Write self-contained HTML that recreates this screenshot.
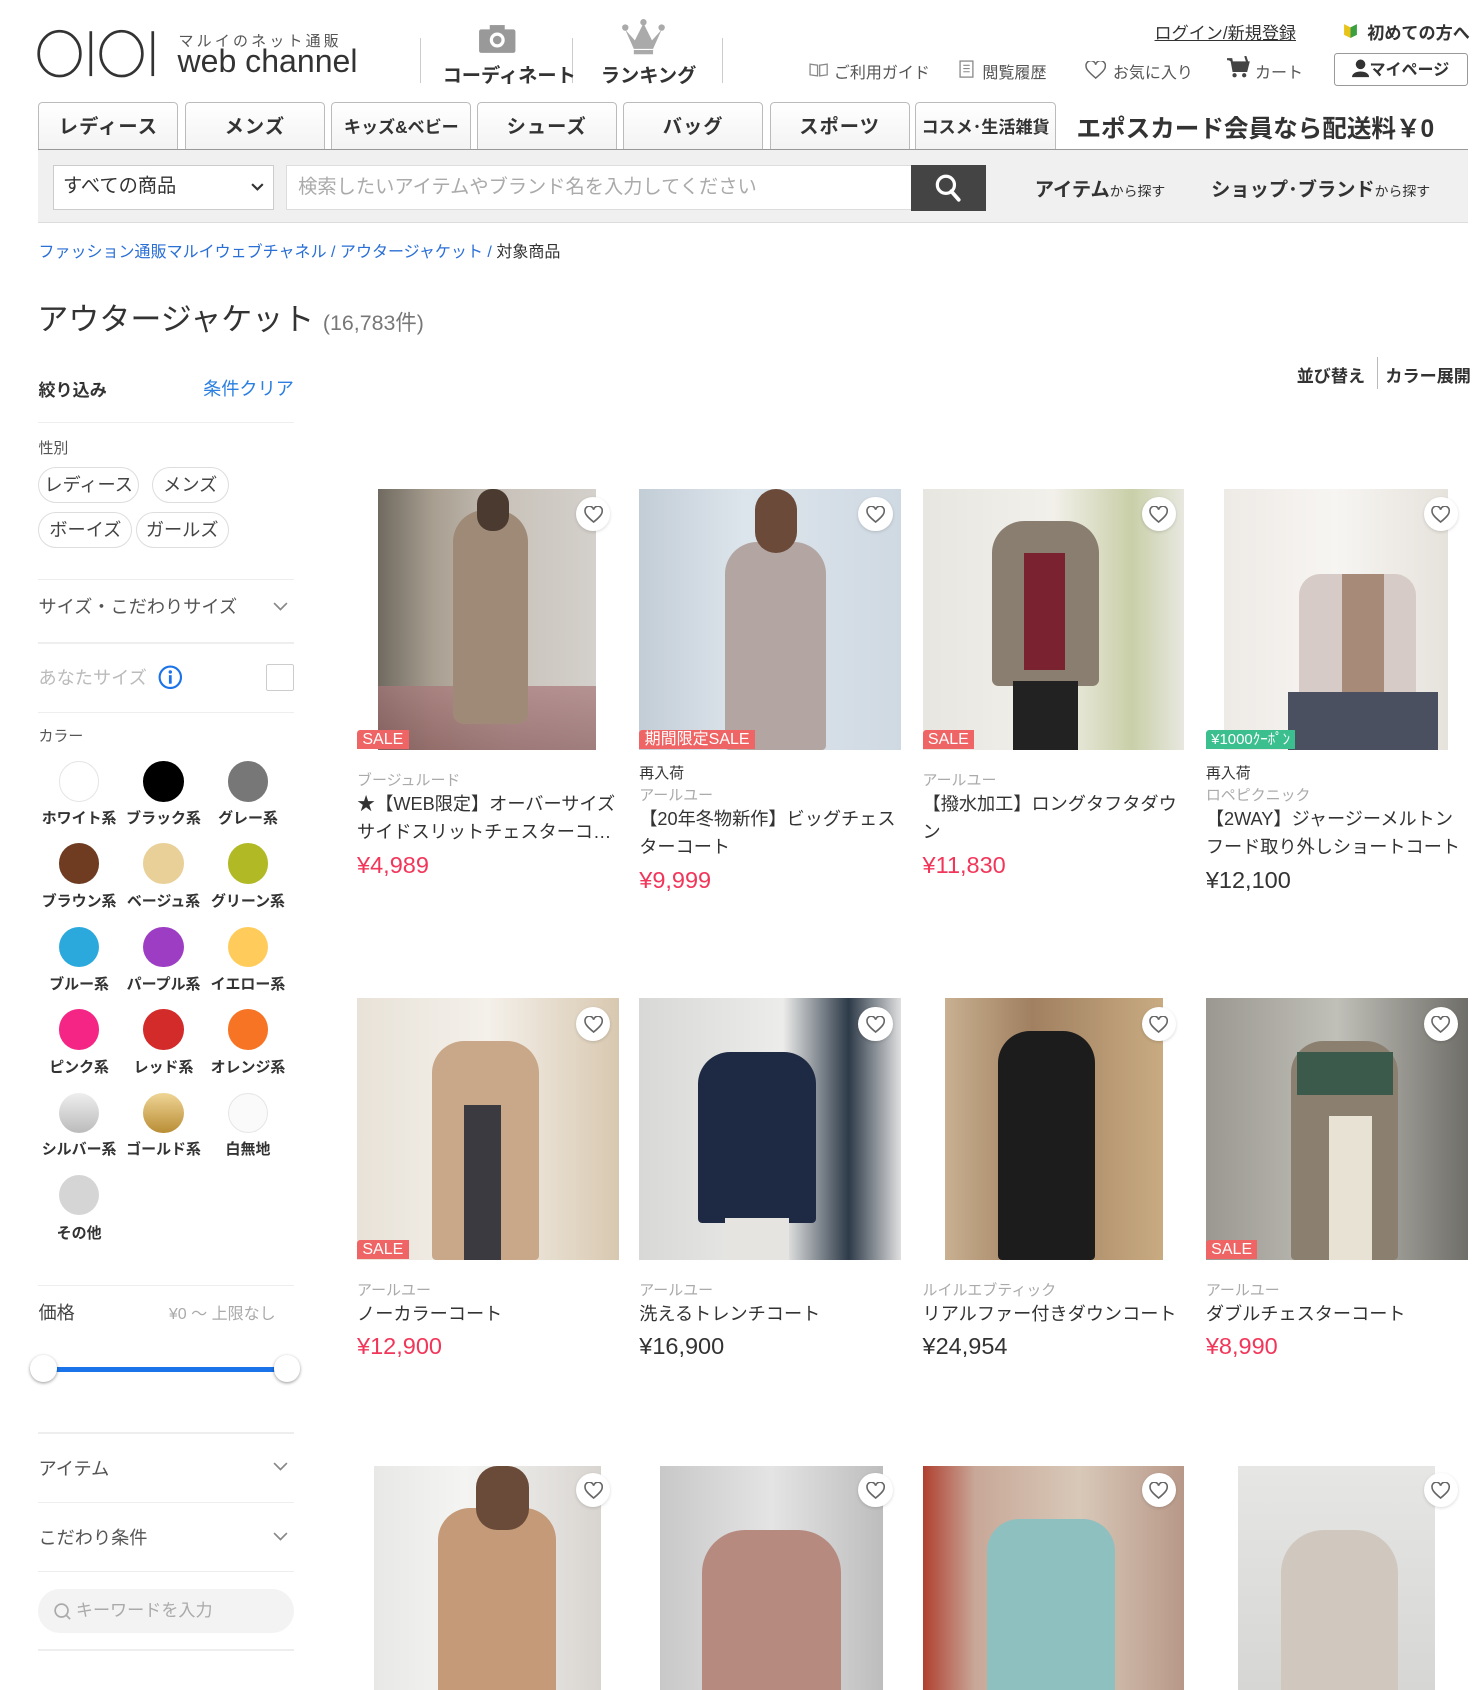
<!DOCTYPE html>
<html><head><meta charset="utf-8">
<style>
html{zoom:1.069}
body{margin:0;width:1388px;height:1563px;overflow:hidden;position:relative;background:#fff;font-family:"Liberation Sans","Noto Sans CJK JP",sans-serif;color:#333}
.a{position:absolute;white-space:nowrap}
.b{font-weight:bold}
.tab{position:absolute;top:95px;width:129px;height:44px;border:1px solid #bbb;border-bottom:none;border-radius:4px 4px 0 0;background:linear-gradient(#fff,#f3f3f3);text-align:center;line-height:46px;font-weight:bold;font-size:18px;color:#333;letter-spacing:1px}
.sw{position:absolute;width:38px;height:38px;border-radius:50%}
.sl{position:absolute;width:80px;text-align:center;font-size:14px;font-weight:bold;color:#333}
.hr{position:absolute;left:36px;width:239px;height:1px;background:#eee}
.pill{position:absolute;height:32px;border:1px solid #ddd;border-radius:17px;font-size:17px;line-height:32px;text-align:center;color:#444}
.img{position:absolute;overflow:hidden}
.heart{position:absolute;width:32px;height:32px;border-radius:50%;background:#fff;box-shadow:0 1px 3px rgba(0,0,0,.15)}
.heart svg{position:absolute;left:7px;top:8px}
.badge{position:absolute;height:18px;line-height:18px;font-size:15px;color:#fff;background:#ef6464;padding:0 5px;border-radius:3px 0 0 0}
.br{position:absolute;font-size:14px;color:#aaa;white-space:nowrap}
.t{position:absolute;font-size:17px;color:#333;line-height:26px;width:242px}
.p{position:absolute;font-size:22px;color:#333}
.red{color:#f2365a}
.chev{position:absolute;left:255px}
</style></head><body>
<svg class="a" style="left:34px;top:26px" width="124" height="50" viewBox="0 0 124 50">
<ellipse cx="22" cy="24" rx="19.5" ry="21" fill="none" stroke="#333" stroke-width="2.5"/>
<rect x="50" y="3" width="2.5" height="42" fill="#333"/>
<ellipse cx="80" cy="24" rx="19.5" ry="21" fill="none" stroke="#333" stroke-width="2.5"/>
<rect x="108" y="3" width="2.5" height="42" fill="#333"/>
</svg>
<div class="a" style="left:167px;top:28px;font-size:14px;color:#555;letter-spacing:3px">マルイのネット通販</div>
<div class="a" style="left:166px;top:40px;font-size:30px;color:#333">web channel</div>
<div class="a" style="left:393px;top:36px;width:1px;height:42px;background:#ccc"></div>
<div class="a" style="left:535px;top:36px;width:1px;height:42px;background:#ccc"></div>
<div class="a" style="left:675px;top:36px;width:1px;height:42px;background:#ccc"></div>
<svg class="a" style="left:447px;top:22px" width="36" height="28"><rect x="1" y="5" width="34" height="22" rx="2" fill="#999"/><rect x="11" y="1" width="14" height="6" fill="#999"/><circle cx="18" cy="15" r="7" fill="#fff"/><circle cx="18" cy="15" r="4" fill="#999"/></svg>
<div class="a b" style="left:414px;top:56px;font-size:18px">コーディネート</div>
<svg class="a" style="left:581px;top:18px" width="42" height="34"><path d="M4 10 L12 28 L30 28 L38 10 L29 20 L21 4 L13 20 Z" fill="#aaa"/><circle cx="4" cy="8" r="3" fill="#aaa"/><circle cx="38" cy="8" r="3" fill="#aaa"/><circle cx="21" cy="3" r="3" fill="#aaa"/><rect x="12" y="29" width="18" height="4" fill="#aaa"/></svg>
<div class="a b" style="left:562px;top:56px;font-size:18px">ランキング</div>

<div class="a" style="left:1080px;top:18px;font-size:16px;text-decoration:underline;color:#333">ログイン/新規登録</div>
<svg class="a" style="left:1256px;top:21px" width="14" height="16"><path d="M1 2 L7 5 L7 15 L1 12Z" fill="#e8c41a"/><path d="M13 2 L7 5 L7 15 L13 12Z" fill="#3aa040"/></svg>
<div class="a b" style="left:1279px;top:18px;font-size:16px">初めての方へ</div>
<svg class="a" style="left:757px;top:58px" width="18" height="14"><path d="M1 2 L8 3 L8 13 L1 12Z M17 2 L10 3 L10 13 L17 12Z" fill="none" stroke="#888" stroke-width="1.2"/></svg>
<div class="a" style="left:780px;top:55px;font-size:15px;color:#555">ご利用ガイド</div>
<svg class="a" style="left:897px;top:56px" width="14" height="17"><rect x="1" y="1" width="12" height="15" fill="none" stroke="#888" stroke-width="1.2"/><path d="M4 5h6M4 8h6M4 11h6" stroke="#888"/></svg>
<div class="a" style="left:919px;top:55px;font-size:15px;color:#555">閲覧履歴</div>
<svg class="a" style="left:1015px;top:57px" width="20" height="17"><path d="M10 16 C3 10 1 7.5 1 5 A4.5 4.5 0 0 1 10 3.5 A4.5 4.5 0 0 1 19 5 C19 7.5 17 10 10 16Z" fill="none" stroke="#666" stroke-width="1.4"/></svg>
<div class="a" style="left:1041px;top:55px;font-size:15px;color:#555">お気に入り</div>
<svg class="a" style="left:1147px;top:52px" width="22" height="22"><path d="M1 3 L5 3 L7 14 L19 14 L21 6 L6 6" fill="#444" stroke="#444" stroke-width="2"/><circle cx="8" cy="18" r="2" fill="#444"/><circle cx="17" cy="18" r="2" fill="#444"/><path d="M18 0 L20 6" stroke="#444" stroke-width="2"/></svg>
<div class="a" style="left:1174px;top:55px;font-size:15px;color:#555">カート</div>
<div class="a" style="left:1248px;top:50px;width:123px;height:29px;border:1px solid #999;border-radius:3px;font-size:15px;line-height:30px;text-align:center;font-weight:bold"><svg width="16" height="17" style="vertical-align:-2px"><circle cx="8" cy="5" r="4.5" fill="#333"/><path d="M0 17 C0 10 16 10 16 17Z" fill="#333"/></svg>マイページ</div>

<div class="tab" style="left:36px">レディース</div>
<div class="tab" style="left:173px">メンズ</div>
<div class="tab" style="left:310px;font-size:16px;letter-spacing:0">キッズ&amp;ベビー</div>
<div class="tab" style="left:446px">シューズ</div>
<div class="tab" style="left:583px">バッグ</div>
<div class="tab" style="left:720px">スポーツ</div>
<div class="tab" style="left:856px;width:130px;font-size:16px;letter-spacing:0">コスメ･生活雑貨</div>
<div class="a b" style="left:1007px;top:102px;font-size:23px;color:#333">エポスカード会員なら配送料￥0</div>

<div class="a" style="left:36px;top:139px;width:1337px;height:68px;background:#f0f0f0;border-top:1px solid #999;border-bottom:1px solid #ddd"></div>
<div class="a" style="left:50px;top:154px;width:204px;height:41px;background:#fff;border:1px solid #ccc;font-size:18px;line-height:40px;text-indent:8px">すべての商品<svg style="position:absolute;right:8px;top:16px" width="12" height="8"><path d="M1 1 L6 6 L11 1" fill="none" stroke="#333" stroke-width="2"/></svg></div>
<div class="a" style="left:268px;top:154px;width:584px;height:41px;background:#fff;border:1px solid #ddd;font-size:18px;line-height:41px;text-indent:10px;color:#aaa">検索したいアイテムやブランド名を入力してください</div>
<div class="a" style="left:852px;top:154px;width:70px;height:43px;background:#444"></div>
<svg class="a" style="left:872px;top:161px" width="30" height="30"><circle cx="13" cy="12" r="8" fill="none" stroke="#fff" stroke-width="3"/><path d="M18 18 L25 26" stroke="#fff" stroke-width="3.5" stroke-linecap="round"/></svg>
<div class="a b" style="left:968px;top:163px;font-size:18px">アイテム<span style="font-size:13px;font-weight:normal">から探す</span></div>
<div class="a b" style="left:1133px;top:163px;font-size:18px">ショップ･ブランド<span style="font-size:13px;font-weight:normal">から探す</span></div>

<div class="a" style="left:36px;top:223px;font-size:15px;color:#2a6fd6">ファッション通販マルイウェブチャネル / アウタージャケット / <span style="color:#333">対象商品</span></div>
<div class="a" style="left:35px;top:275px;font-size:29px;color:#333">アウタージャケット <span style="font-size:20px;color:#777">(16,783件)</span></div>

<div class="a b" style="left:36px;top:352px;font-size:16px">絞り込み</div>
<div class="a" style="left:190px;top:351px;font-size:17px;color:#2a7fe0">条件クリア</div>
<div class="hr" style="top:395px"></div>
<div class="a" style="left:36px;top:409px;font-size:14px;color:#555">性別</div>
<div class="pill" style="left:36px;top:437px;width:92px">レディース</div>
<div class="pill" style="left:142px;top:437px;width:70px">メンズ</div>
<div class="pill" style="left:36px;top:479px;width:86px">ボーイズ</div>
<div class="pill" style="left:127px;top:479px;width:85px">ガールズ</div>
<div class="hr" style="top:542px"></div>
<div class="a" style="left:36px;top:555px;font-size:17px;color:#555">サイズ・こだわりサイズ</div>
<svg class="chev" style="top:563px" width="14" height="9"><path d="M1 1 L7 7 L13 1" fill="none" stroke="#888" stroke-width="1.6"/></svg>
<div class="hr" style="top:601px"></div>
<div class="a" style="left:36px;top:621px;font-size:17px;color:#bbb">あなたサイズ</div>
<svg class="a" style="left:148px;top:622px" width="23" height="23"><circle cx="11.5" cy="11.5" r="10" fill="none" stroke="#1a73e8" stroke-width="2"/><circle cx="11.5" cy="6.5" r="1.6" fill="#1a73e8"/><rect x="10.2" y="9.5" width="2.6" height="8" fill="#1a73e8"/></svg>
<div class="a" style="left:249px;top:621px;width:24px;height:24px;border:1px solid #ccc;border-radius:2px"></div>
<div class="hr" style="top:666px"></div>
<div class="a" style="left:36px;top:678px;font-size:14px;color:#555">カラー</div>

<div class="sw" style="left:55px;top:712px;border:1px solid #e5e5e5;width:36px;height:36px"></div>
<div class="sw" style="left:134px;top:712px;background:#000"></div>
<div class="sw" style="left:213px;top:712px;background:#777"></div>
<div class="sl" style="left:34px;top:755px">ホワイト系</div><div class="sl" style="left:113px;top:755px">ブラック系</div><div class="sl" style="left:192px;top:755px">グレー系</div>
<div class="sw" style="left:55px;top:789px;background:#6f3c22"></div>
<div class="sw" style="left:134px;top:789px;background:#e8d098"></div>
<div class="sw" style="left:213px;top:789px;background:#b1b924"></div>
<div class="sl" style="left:34px;top:833px">ブラウン系</div><div class="sl" style="left:113px;top:833px">ベージュ系</div><div class="sl" style="left:192px;top:833px">グリーン系</div>
<div class="sw" style="left:55px;top:867px;background:#2ba9dc"></div>
<div class="sw" style="left:134px;top:867px;background:#9d3dc4"></div>
<div class="sw" style="left:213px;top:867px;background:#ffcc5c"></div>
<div class="sl" style="left:34px;top:910px">ブルー系</div><div class="sl" style="left:113px;top:910px">パープル系</div><div class="sl" style="left:192px;top:910px">イエロー系</div>
<div class="sw" style="left:55px;top:944px;background:#f42584"></div>
<div class="sw" style="left:134px;top:944px;background:#d32a2a"></div>
<div class="sw" style="left:213px;top:944px;background:#f77424"></div>
<div class="sl" style="left:34px;top:988px">ピンク系</div><div class="sl" style="left:113px;top:988px">レッド系</div><div class="sl" style="left:192px;top:988px">オレンジ系</div>
<div class="sw" style="left:55px;top:1022px;background:linear-gradient(#eee,#bbb)"></div>
<div class="sw" style="left:134px;top:1022px;background:linear-gradient(#efd595,#b98d35)"></div>
<div class="sw" style="left:213px;top:1022px;border:1px solid #e5e5e5;width:36px;height:36px;background:#fafafa"></div>
<div class="sl" style="left:34px;top:1065px">シルバー系</div><div class="sl" style="left:113px;top:1065px">ゴールド系</div><div class="sl" style="left:192px;top:1065px">白無地</div>
<div class="sw" style="left:55px;top:1099px;background:#d5d5d5"></div>
<div class="sl" style="left:34px;top:1143px">その他</div>

<div class="hr" style="top:1202px"></div>
<div class="a" style="left:36px;top:1215px;font-size:17px;color:#444">価格</div>
<div class="a" style="left:158px;top:1216px;font-size:15px;color:#aaa">¥0 〜 上限なし</div>
<div class="a" style="left:42px;top:1279px;width:226px;height:4px;background:#1a73e8"></div>
<div class="a" style="left:28px;top:1268px;width:25px;height:25px;border-radius:50%;background:#fff;box-shadow:0 1px 3px rgba(0,0,0,.4)"></div>
<div class="a" style="left:256px;top:1268px;width:25px;height:25px;border-radius:50%;background:#fff;box-shadow:0 1px 3px rgba(0,0,0,.4)"></div>
<div class="hr" style="top:1340px"></div>
<div class="a" style="left:36px;top:1361px;font-size:17px;color:#555">アイテム</div>
<svg class="chev" style="top:1368px" width="14" height="9"><path d="M1 1 L7 7 L13 1" fill="none" stroke="#888" stroke-width="1.6"/></svg>
<div class="hr" style="top:1405px"></div>
<div class="a" style="left:36px;top:1426px;font-size:17px;color:#555">こだわり条件</div>
<svg class="chev" style="top:1433px" width="14" height="9"><path d="M1 1 L7 7 L13 1" fill="none" stroke="#888" stroke-width="1.6"/></svg>
<div class="hr" style="top:1470px"></div>
<div class="a" style="left:36px;top:1486px;width:239px;height:42px;border-radius:21px;background:#f3f3f3;font-size:16px;line-height:42px;color:#aaa"><svg style="position:absolute;left:14px;top:13px" width="18" height="18"><circle cx="8" cy="8" r="6" fill="none" stroke="#aaa" stroke-width="1.6"/><path d="M12 12 L16 16" stroke="#aaa" stroke-width="1.6"/></svg><span style="position:absolute;left:35px">キーワードを入力</span></div>
<div class="hr" style="top:1543px"></div>

<div class="a b" style="left:1213px;top:339px;font-size:16px">並び替え</div>
<div class="a" style="left:1288px;top:334px;width:1px;height:30px;background:#bbb"></div>
<div class="a b" style="left:1296px;top:339px;font-size:16px">カラー展開</div>

<!-- row 1 -->
<div class="img" style="left:354px;top:457px;width:204px;height:245px;background:linear-gradient(90deg,#6f6a60 0,#a89e90 25%,#c9c3bb 60%,#d4d0cb 100%)"><div style="position:absolute;left:0;top:185px;width:204px;height:60px;background:linear-gradient(#a8787a,#8a5a5c);opacity:.7"></div><div style="position:absolute;left:70px;top:20px;width:70px;height:200px;background:#9e8a76;border-radius:30px 30px 10px 10px"></div><div style="position:absolute;left:92px;top:0;width:30px;height:40px;background:#4a3a30;border-radius:14px"></div></div>
<div class="badge" style="left:334px;top:683px">SALE</div>
<div class="heart" style="left:539px;top:465px"><svg width="18" height="16"><path d="M9 15 C3 10 1 7.5 1 5 A4 4 0 0 1 9 3.5 A4 4 0 0 1 17 5 C17 7.5 15 10 9 15Z" fill="none" stroke="#666" stroke-width="1.5"/></svg></div>
<div class="br" style="left:334px;top:719px">ブージュルード</div>
<div class="t" style="left:334px;top:740px">★【WEB限定】オーバーサイズサイドスリットチェスターコ…</div>
<div class="p red" style="left:334px;top:797px">¥4,989</div>

<div class="img" style="left:598px;top:457px;width:245px;height:245px;background:linear-gradient(90deg,#c3cdd6,#dde5ec 40%,#cfd9e2)"><div style="position:absolute;left:80px;top:50px;width:95px;height:195px;background:#b3a6a2;border-radius:30px 30px 4px 4px"></div><div style="position:absolute;left:108px;top:0;width:40px;height:60px;background:#6b4a3a;border-radius:20px"></div></div>
<div class="badge" style="left:598px;top:683px">期間限定SALE</div>
<div class="heart" style="left:803px;top:465px"><svg width="18" height="16"><path d="M9 15 C3 10 1 7.5 1 5 A4 4 0 0 1 9 3.5 A4 4 0 0 1 17 5 C17 7.5 15 10 9 15Z" fill="none" stroke="#666" stroke-width="1.5"/></svg></div>
<div class="a" style="left:598px;top:713px;font-size:14px;color:#333">再入荷</div>
<div class="br" style="left:598px;top:733px">アールユー</div>
<div class="t" style="left:598px;top:754px">【20年冬物新作】ビッグチェスターコート</div>
<div class="p red" style="left:598px;top:811px">¥9,999</div>

<div class="img" style="left:863px;top:457px;width:245px;height:245px;background:linear-gradient(90deg,#e8e6e0,#f2f0ea 50%,#c9cfa8 80%,#e8e8e0)"><div style="position:absolute;left:65px;top:30px;width:100px;height:155px;background:#8a7e70;border-radius:30px 30px 6px 6px"></div><div style="position:absolute;left:95px;top:60px;width:38px;height:110px;background:#7a2230"></div><div style="position:absolute;left:85px;top:180px;width:60px;height:65px;background:#222"></div></div>
<div class="badge" style="left:863px;top:683px">SALE</div>
<div class="heart" style="left:1068px;top:465px"><svg width="18" height="16"><path d="M9 15 C3 10 1 7.5 1 5 A4 4 0 0 1 9 3.5 A4 4 0 0 1 17 5 C17 7.5 15 10 9 15Z" fill="none" stroke="#666" stroke-width="1.5"/></svg></div>
<div class="br" style="left:863px;top:719px">アールユー</div>
<div class="t" style="left:863px;top:740px">【撥水加工】ロングタフタダウン</div>
<div class="p red" style="left:863px;top:797px">¥11,830</div>

<div class="img" style="left:1145px;top:457px;width:210px;height:245px;background:linear-gradient(90deg,#eeeae6,#f7f5f2 50%,#e6e2dc)"><div style="position:absolute;left:70px;top:80px;width:110px;height:130px;background:#d6cbc6;border-radius:20px 20px 4px 4px"></div><div style="position:absolute;left:110px;top:80px;width:40px;height:110px;background:#a78a78"></div><div style="position:absolute;left:60px;top:190px;width:140px;height:55px;background:#4a5060"></div></div>
<div class="badge" style="left:1128px;top:683px;background:#3cbf8f;font-size:14px">¥1000ｸｰﾎﾟﾝ</div>
<div class="heart" style="left:1332px;top:465px"><svg width="18" height="16"><path d="M9 15 C3 10 1 7.5 1 5 A4 4 0 0 1 9 3.5 A4 4 0 0 1 17 5 C17 7.5 15 10 9 15Z" fill="none" stroke="#666" stroke-width="1.5"/></svg></div>
<div class="a" style="left:1128px;top:713px;font-size:14px;color:#333">再入荷</div>
<div class="br" style="left:1128px;top:733px">ロペピクニック</div>
<div class="t" style="left:1128px;top:754px">【2WAY】ジャージーメルトンフード取り外しショートコート</div>
<div class="p" style="left:1128px;top:811px">¥12,100</div>

<!-- row 2 -->
<div class="img" style="left:334px;top:934px;width:245px;height:245px;background:linear-gradient(90deg,#e8e2d8,#f4f0ea 50%,#d8c8b0)"><div style="position:absolute;left:70px;top:40px;width:100px;height:205px;background:#c8a888;border-radius:30px 30px 4px 4px"></div><div style="position:absolute;left:100px;top:100px;width:35px;height:145px;background:#3a3a40"></div></div>
<div class="badge" style="left:334px;top:1160px">SALE</div>
<div class="heart" style="left:539px;top:942px"><svg width="18" height="16"><path d="M9 15 C3 10 1 7.5 1 5 A4 4 0 0 1 9 3.5 A4 4 0 0 1 17 5 C17 7.5 15 10 9 15Z" fill="none" stroke="#666" stroke-width="1.5"/></svg></div>
<div class="br" style="left:334px;top:1196px">アールユー</div>
<div class="t" style="left:334px;top:1217px">ノーカラーコート</div>
<div class="p red" style="left:334px;top:1247px">¥12,900</div>

<div class="img" style="left:598px;top:934px;width:245px;height:245px;background:linear-gradient(90deg,#d8d8d6,#ececea 55%,#2d3a48 80%,#e0e0e0)"><div style="position:absolute;left:55px;top:50px;width:110px;height:160px;background:#1e2a44;border-radius:30px 30px 4px 4px"></div><div style="position:absolute;left:80px;top:205px;width:60px;height:40px;background:#e6e4e0"></div></div>
<div class="heart" style="left:803px;top:942px"><svg width="18" height="16"><path d="M9 15 C3 10 1 7.5 1 5 A4 4 0 0 1 9 3.5 A4 4 0 0 1 17 5 C17 7.5 15 10 9 15Z" fill="none" stroke="#666" stroke-width="1.5"/></svg></div>
<div class="br" style="left:598px;top:1196px">アールユー</div>
<div class="t" style="left:598px;top:1217px">洗えるトレンチコート</div>
<div class="p" style="left:598px;top:1247px">¥16,900</div>

<div class="img" style="left:884px;top:934px;width:204px;height:245px;background:linear-gradient(90deg,#c8b090,#a08060 40%,#c9ab82)"><div style="position:absolute;left:50px;top:30px;width:90px;height:215px;background:#1c1c1c;border-radius:30px 30px 4px 4px"></div></div>
<div class="heart" style="left:1068px;top:942px"><svg width="18" height="16"><path d="M9 15 C3 10 1 7.5 1 5 A4 4 0 0 1 9 3.5 A4 4 0 0 1 17 5 C17 7.5 15 10 9 15Z" fill="none" stroke="#666" stroke-width="1.5"/></svg></div>
<div class="br" style="left:863px;top:1196px">ルイルエブティック</div>
<div class="t" style="left:863px;top:1217px">リアルファー付きダウンコート</div>
<div class="p" style="left:863px;top:1247px">¥24,954</div>

<div class="img" style="left:1128px;top:934px;width:245px;height:245px;background:linear-gradient(90deg,#9a9890,#c0bfb8 50%,#6f6e68)"><div style="position:absolute;left:80px;top:40px;width:100px;height:205px;background:#8b8070;border-radius:30px 30px 4px 4px"></div><div style="position:absolute;left:85px;top:50px;width:90px;height:40px;background:#3c5a4c"></div><div style="position:absolute;left:115px;top:110px;width:40px;height:135px;background:#e8e2d4"></div></div>
<div class="badge" style="left:1128px;top:1160px">SALE</div>
<div class="heart" style="left:1332px;top:942px"><svg width="18" height="16"><path d="M9 15 C3 10 1 7.5 1 5 A4 4 0 0 1 9 3.5 A4 4 0 0 1 17 5 C17 7.5 15 10 9 15Z" fill="none" stroke="#666" stroke-width="1.5"/></svg></div>
<div class="br" style="left:1128px;top:1196px">アールユー</div>
<div class="t" style="left:1128px;top:1217px">ダブルチェスターコート</div>
<div class="p red" style="left:1128px;top:1247px">¥8,990</div>

<!-- row 3 -->
<div class="img" style="left:350px;top:1371px;width:212px;height:210px;background:linear-gradient(90deg,#e8e8e6,#f4f4f2 40%,#d8d4d0)"><div style="position:absolute;left:60px;top:40px;width:110px;height:170px;background:#c49a78;border-radius:30px 30px 0 0"></div><div style="position:absolute;left:95px;top:0;width:50px;height:60px;background:#6a4a38;border-radius:20px"></div></div>
<div class="heart" style="left:539px;top:1378px"><svg width="18" height="16"><path d="M9 15 C3 10 1 7.5 1 5 A4 4 0 0 1 9 3.5 A4 4 0 0 1 17 5 C17 7.5 15 10 9 15Z" fill="none" stroke="#666" stroke-width="1.5"/></svg></div>
<div class="img" style="left:617px;top:1371px;width:209px;height:210px;background:linear-gradient(90deg,#c8c8c8,#e4e4e4 50%,#bdbdbd)"><div style="position:absolute;left:40px;top:60px;width:130px;height:150px;background:#b78a80;border-radius:40px 40px 0 0"></div></div>
<div class="heart" style="left:803px;top:1378px"><svg width="18" height="16"><path d="M9 15 C3 10 1 7.5 1 5 A4 4 0 0 1 9 3.5 A4 4 0 0 1 17 5 C17 7.5 15 10 9 15Z" fill="none" stroke="#666" stroke-width="1.5"/></svg></div>
<div class="img" style="left:863px;top:1371px;width:245px;height:210px;background:linear-gradient(90deg,#b04030,#c8a898 20%,#d8c8b8 60%,#b89888)"><div style="position:absolute;left:60px;top:50px;width:120px;height:160px;background:#8ec0c0;border-radius:30px 30px 0 0"></div></div>
<div class="heart" style="left:1068px;top:1378px"><svg width="18" height="16"><path d="M9 15 C3 10 1 7.5 1 5 A4 4 0 0 1 9 3.5 A4 4 0 0 1 17 5 C17 7.5 15 10 9 15Z" fill="none" stroke="#666" stroke-width="1.5"/></svg></div>
<div class="img" style="left:1158px;top:1371px;width:184px;height:210px;background:linear-gradient(#e6e6e4,#d6d6d4)"><div style="position:absolute;left:40px;top:60px;width:110px;height:150px;background:#d0c8be;border-radius:40px 40px 0 0"></div></div>
<div class="heart" style="left:1332px;top:1378px"><svg width="18" height="16"><path d="M9 15 C3 10 1 7.5 1 5 A4 4 0 0 1 9 3.5 A4 4 0 0 1 17 5 C17 7.5 15 10 9 15Z" fill="none" stroke="#666" stroke-width="1.5"/></svg></div>
</body></html>
